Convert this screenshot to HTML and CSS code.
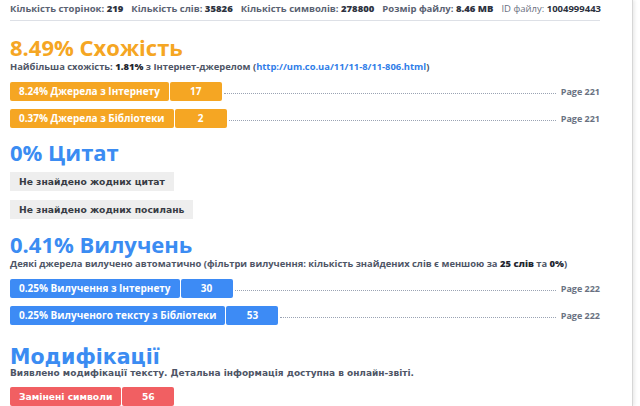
FILE: index.html
```html
<!DOCTYPE html>
<html>
<head>
  <meta charset="utf-8" />
  <title>Звіт подібності</title>
  <link rel="stylesheet" href="styles.css">
</head>
<body>

<div class="page">
  <div class="stats">
    <span>Кількість сторінок: <b>219</b></span>
    <span>Кількість слів: <b>35826</b></span>
    <span>Кількість символів: <b>278800</b></span>
    <span>Розмір файлу: <b>8.46 MB</b></span>
    <span class="light">ID файлу: <b>1004999443</b></span>
  </div>

  <h1 class="title orange">8.49% Схожість</h1>
  <p class="note">Найбільша схожість: <b>1.81%</b> з Інтернет-джерелом (<a href="#">http://um.co.ua/11/11-8/11-806.html</a>)</p>

  <div class="row">
    <div class="bar orange-bg"><span class="label">8.24% Джерела з Інтернету</span><span class="count">17</span></div>
    <div class="dots"></div>
    <span class="page-ref">Page 221</span>
  </div>
  <div class="row">
    <div class="bar orange-bg"><span class="label">0.37% Джерела з Бібліотеки</span><span class="count">2</span></div>
    <div class="dots"></div>
    <span class="page-ref">Page 221</span>
  </div>

  <h1 class="title blue">0% Цитат</h1>
  <div class="empty">Не знайдено жодних цитат</div>
  <div class="empty">Не знайдено жодних посилань</div>

  <h1 class="title blue">0.41% Вилучень</h1>
  <p class="note">Деякі джерела вилучено автоматично (фільтри вилучення: кількість знайдених слів є меншою за <b>25 слів</b> та <b>0%</b>)</p>

  <div class="row">
    <div class="bar blue-bg"><span class="label">0.25% Вилучення з Інтернету</span><span class="count">30</span></div>
    <div class="dots"></div>
    <span class="page-ref">Page 222</span>
  </div>
  <div class="row">
    <div class="bar blue-bg"><span class="label">0.25% Вилученого тексту з Бібліотеки</span><span class="count">53</span></div>
    <div class="dots"></div>
    <span class="page-ref">Page 222</span>
  </div>

  <h1 class="title blue dv">Модифікації</h1>
  <p class="note dv">Виявлено модифікації тексту. Детальна інформація доступна в онлайн-звіті.</p>

  <div class="row">
    <div class="bar red-bg dv"><span class="label">Замінені символи</span><span class="count">56</span></div>
  </div>
</div>

</body>
</html>
```

FILE: styles.css
```css
html, body {
  margin: 0;
  background: #fff;
}

body {
  font-family: "Open Sans", "DejaVu Sans", sans-serif;
  font-weight: 700;
  color: #4a5160;
  overflow: hidden;
}

.page {
  width: 622px;
  height: 406px;
  padding-left: 10px;
  border-right: 1px solid #d6d6d6;
  box-shadow: 2px 0 3px rgba(0, 0, 0, 0.08);
}

.dv {
  font-family: "DejaVu Sans", sans-serif;
}

.stats {
  display: flex;
  gap: 8px;
  width: 590px;
  height: 20px;
  border-bottom: 1px solid #dde0e6;
  font-size: 9.5px;
  line-height: 18px;
  color: #5a6272;
  white-space: nowrap;
}

.stats b {
  color: #2d3240;
}

.stats .light {
  font-weight: 400;
  color: #6a7080;
}

.title {
  margin: 11px 0 0;
  font-size: 22px;
  line-height: 30px;
  font-weight: 700;
}

.orange { color: #f5a623; }
.blue { color: #3b8cf2; }

.title.dv {
  font-size: 20.5px;
  line-height: 24px;
}

.row + .title {
  margin-top: 9px;
}

.row + .title.dv {
  margin-top: 20px;
}

.empty + .title {
  margin-top: 10px;
}

.note {
  margin: -1px 0 9px;
  font-size: 9.4px;
  line-height: 12px;
  color: #4e5566;
}

.note b {
  color: #22262f;
}

.note a {
  color: #2f7de8;
  text-decoration: none;
}

.note.dv {
  margin: -2px 0 8px;
  font-size: 9px;
}

.row {
  display: flex;
  align-items: center;
  width: 590px;
  margin-bottom: 8px;
}

.bar {
  display: flex;
  height: 19px;
  font-size: 10px;
  line-height: 19px;
  color: #fff;
}

.bar span {
  border-radius: 2px;
}

.label {
  padding: 0 9px;
}

.count {
  width: 52px;
  margin-left: 1px;
  text-align: center;
}

.orange-bg span { background: #f5a623; }
.blue-bg span { background: #3d8bf5; }
.red-bg span { background: #f15f62; }

.red-bg {
  font-size: 9.2px;
}

.dots {
  flex: 1;
  margin: 4px 5px 0 2px;
  border-bottom: 1px dotted #9aa3b3;
}

.page-ref {
  font-size: 9px;
  color: #6a7282;
}

.empty {
  display: table;
  height: 19px;
  margin-top: 5px;
  padding: 0 9px;
  background: #eeeeee;
  font-family: "DejaVu Sans", sans-serif;
  font-size: 9.2px;
  line-height: 19px;
  color: #383c44;
}

.empty + .empty {
  margin-top: 9px;
}
```
